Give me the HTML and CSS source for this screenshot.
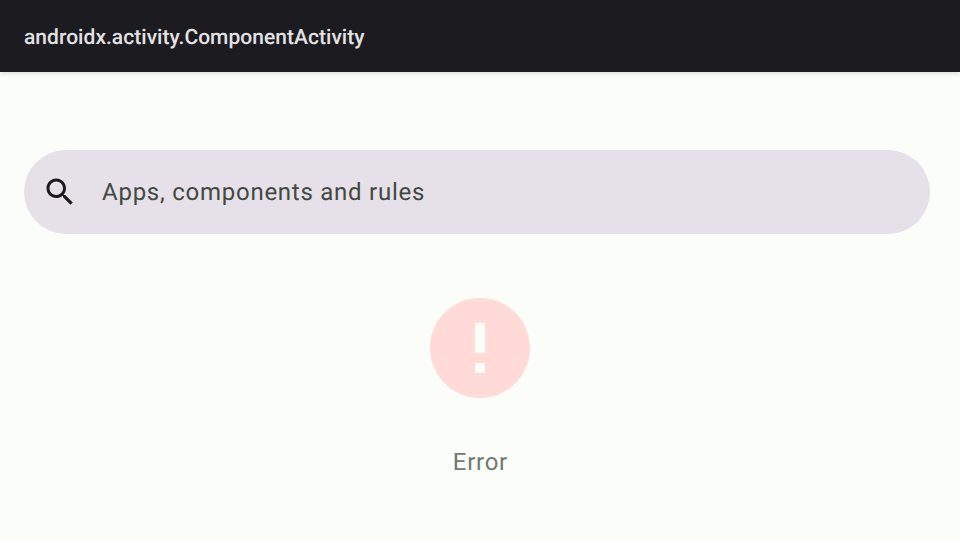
FILE: index.html
```html
<!DOCTYPE html>
<html lang="en">
<head>
<meta charset="utf-8">
<title>androidx.activity.ComponentActivity</title>
<link rel="stylesheet" href="styles.css">
</head>
<body>
<header class="app-bar"><h1 class="app-title">androidx.activity.ComponentActivity</h1></header>
<main class="content">
  <div class="search-bar">
    <svg class="search-icon" viewBox="0 0 24 24" aria-hidden="true"><path d="M15.5 14h-.79l-.28-.27C15.41 12.59 16 11.11 16 9.5 16 5.91 13.09 3 9.5 3S3 5.91 3 9.5 5.91 16 9.5 16c1.61 0 3.09-.59 4.23-1.57l.27.28v.79l5 4.99L20.49 19l-4.99-5zm-6 0C7.01 14 5 11.99 5 9.5S7.01 5 9.5 5 14 7.01 14 9.5 11.99 14 9.5 14z"/></svg>
    <span class="search-hint">Apps, components and rules</span>
  </div>
  <section class="error">
    <svg class="error-icon" viewBox="2 2 20 20" aria-hidden="true"><path d="M12 2C6.48 2 2 6.48 2 12s4.48 10 10 10 10-4.48 10-10S17.52 2 12 2zm1 15h-2v-2h2v2zm0-4h-2V7h2v6z"/></svg>
    <p class="error-text">Error</p>
  </section>
</main>
</body>
</html>
```

FILE: styles.css
```css
* { box-sizing: border-box; }
body {
  margin: 0;
  height: 540px;
  overflow: hidden;
  background: #fbfdf8;
  font-family: Roboto, sans-serif;
  text-rendering: geometricPrecision;
}
.app-bar {
  display: flex;
  align-items: center;
  height: 72px;
  padding: 4px 24px 0;
  background: #1b1b20;
  box-shadow: 0 1px 5px rgba(0, 0, 0, 0.16);
}
.app-title {
  margin: 0;
  color: #e3e2e2;
  font-size: 21px;
  font-weight: 500;
  line-height: 28px;
  letter-spacing: 0.04px;
}
.content { padding: 78px 30px 0 24px; }
.search-bar {
  display: flex;
  align-items: center;
  gap: 24px;
  height: 84px;
  padding-left: 18px;
  border-radius: 42px;
  background: #e6e0e8;
}
.search-icon { width: 36px; height: 36px; fill: #191c1a; }
.search-hint {
  color: #414942;
  font-size: 24px;
  line-height: 36px;
  letter-spacing: 0.75px;
}
.error {
  display: flex;
  flex-direction: column;
  align-items: center;
  margin-right: -6px;
  padding-top: 64px;
}
.error-icon { width: 100px; height: 100px; fill: #ffdad6; }
.error-text {
  margin: 46px 0 0;
  padding-left: 0.75px;
  color: #717972;
  font-size: 24px;
  line-height: 36px;
  letter-spacing: 0.75px;
}
```
